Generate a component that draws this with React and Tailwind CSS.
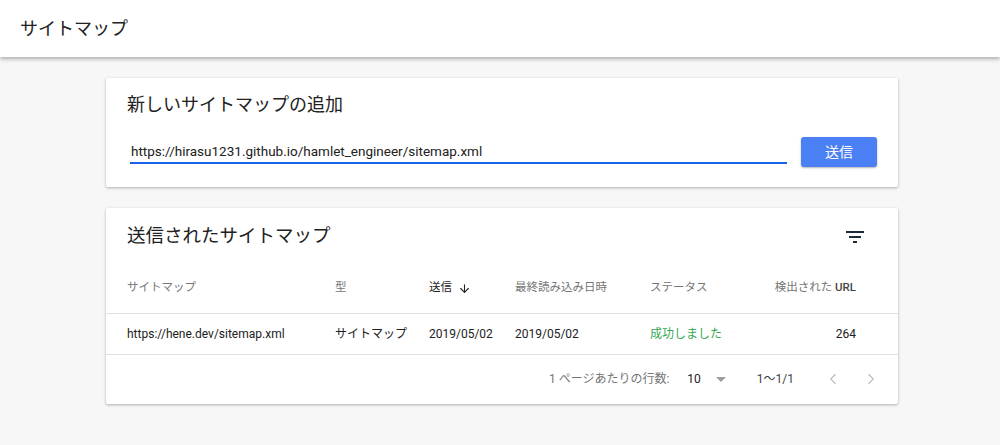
import React from 'react';
import {ArrowDown, ChevronLeft, ChevronRight} from 'lucide-react';

const font = { fontFamily: "Roboto, 'Noto Sans CJK JP', sans-serif" };

const FilterIcon = () => (
    <svg width="18" height="12" viewBox="0 0 18 12" className="text-gray-800">
        <rect x="0" y="0" width="18" height="2" fill="currentColor"/>
        <rect x="3" y="5" width="12" height="2" fill="currentColor"/>
        <rect x="7" y="10" width="4" height="2" fill="currentColor"/>
    </svg>
);

const App = () => {
    const cols = "grid grid-cols-[208px_94px_86px_135px_1fr_100px] items-center";

    return (
        <div className="min-h-[445px] bg-[#f7f7f7]" style={font}>
            <header className="h-[57px] bg-white flex items-center pl-5 shadow-[0_2px_4px_rgba(0,0,0,0.3)] relative">
                <h1 className="text-[18px] text-[#212121]">サイトマップ</h1>
            </header>

            <main className="ml-[106px] w-[792px] pt-[21px] flex flex-col gap-[21px]">
                {/* 追加フォーム */}
                <section className="bg-white h-[109px] rounded-[2px] shadow-[0_1px_3px_rgba(0,0,0,0.3)] px-[21px] pt-[14px]">
                    <h2 className="text-[18px] text-[#212121] leading-[26px]">新しいサイトマップの追加</h2>
                    <div className="flex items-end mt-[19px]">
                        <div className="w-[657px] ml-[3px] border-b-2 border-[#1a62e8] pb-[1px] text-[13.5px] text-[#212121] leading-[20px] px-[1px]">
                            https://hirasu1231.github.io/hamlet_engineer/sitemap.xml
                        </div>
                        <button className="ml-[14px] mb-[-3px] w-[76px] h-[30px] rounded-[3px] bg-[#4a80f3] text-white text-[14px] shadow-[0_1px_2px_rgba(0,0,0,0.3)]">
                            送信
                        </button>
                    </div>
                </section>

                {/* 送信済み一覧 */}
                <section className="bg-white h-[196px] rounded-[2px] shadow-[0_1px_3px_rgba(0,0,0,0.3)]">
                    <div className="flex items-center justify-between pl-[21px] pr-[34px] pt-[15px] h-[42px]">
                        <h2 className="text-[18.5px] text-[#212121]">送信されたサイトマップ</h2>
                        <FilterIcon/>
                    </div>

                    <div className={`${cols} pl-[21px] pr-[42px] h-[64px] pt-[13px] text-[11.5px] text-[#757575] border-b border-[#e0e0e0]`}>
                        <span>サイトマップ</span>
                        <span>型</span>
                        <span className="flex items-center gap-[6px] text-[#212121]">
                            送信 <ArrowDown className="w-[13px] h-[13px]" strokeWidth={2}/>
                        </span>
                        <span>最終読み込み日時</span>
                        <span>ステータス</span>
                        <span className="text-right">検出された <span className="font-medium text-[#444]">URL</span></span>
                    </div>

                    <div className={`${cols} pl-[21px] pr-[42px] h-[41px] text-[12px] text-[#212121] border-b border-[#e0e0e0]`}>
                        <span>https://hene.dev/sitemap.xml</span>
                        <span>サイトマップ</span>
                        <span>2019/05/02</span>
                        <span>2019/05/02</span>
                        <span className="text-[#34a853]">成功しました</span>
                        <span className="text-right">264</span>
                    </div>

                    <div className="flex items-center justify-end h-[48px] pr-[18px] text-[12px] text-[#757575]">
                        <span>1 ページあたりの行数:</span>
                        <span className="ml-[18px] text-[#212121]">10</span>
                        <svg width="10" height="5" viewBox="0 0 10 5" className="ml-[15px] text-[#9e9e9e]">
                            <path d="M0 0 L10 0 L5 5 Z" fill="currentColor"/>
                        </svg>
                        <span className="ml-[31px] text-[#424242]">1〜1/1</span>
                        <ChevronLeft className="ml-[30px] w-[18px] h-[18px] text-[#bdbdbd]" strokeWidth={1.5}/>
                        <ChevronRight className="ml-[20px] w-[18px] h-[18px] text-[#bdbdbd]" strokeWidth={1.5}/>
                    </div>
                </section>
            </main>
        </div>
    );
};

export default App;
